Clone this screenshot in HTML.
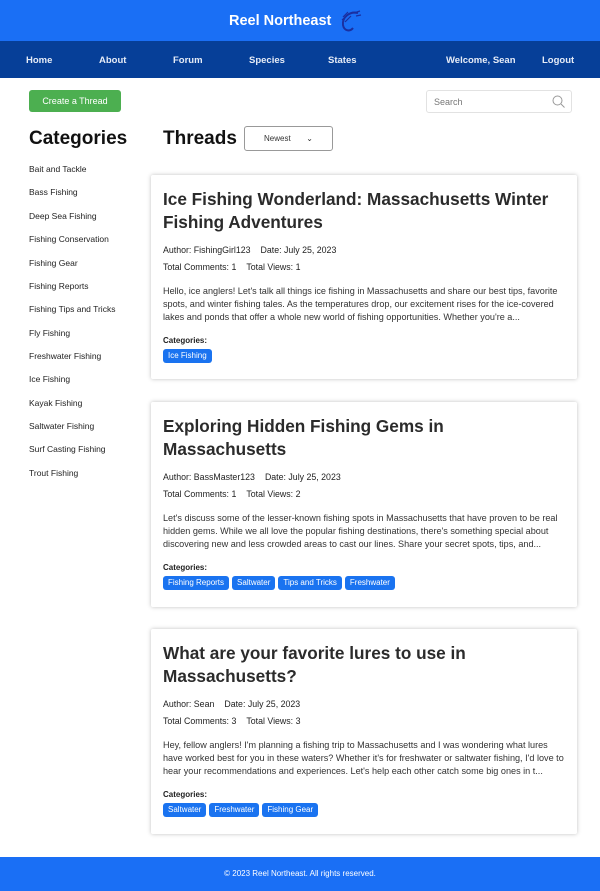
<!DOCTYPE html>
<html><head><meta charset="utf-8"><style>
*{margin:0;padding:0;box-sizing:border-box}
body{width:600px;height:891px;position:relative;background:#fff;font-family:"Liberation Sans",sans-serif;color:#222;overflow:hidden}
.hdr{position:absolute;left:0;top:0;width:600px;height:41px;background:#1a6ff5}
.hdr .t{position:absolute;left:229px;top:13px;font-size:14.5px;font-weight:bold;color:#fff}
.nav{position:absolute;left:0;top:41px;width:600px;height:37px;background:#063f98;color:#e6ecf7;font-size:9.5px;font-weight:bold}
.nav span{position:absolute;top:14px}
.btn{position:absolute;left:29px;top:90px;width:92px;height:22px;background:#4caf50;border-radius:3px;color:#fff;font-size:9px;text-align:center;line-height:22px}
.srch{position:absolute;left:426px;top:90px;width:146px;height:23px;border:1px solid #e2e2e2;border-radius:3px;font-size:9px;color:#777;padding:6px 7px}
h2{position:absolute;font-size:19px;font-weight:bold;color:#111}
.sel{position:absolute;left:244px;top:126px;width:89px;height:25px;border:1px solid #999;border-radius:3px;font-size:8px;text-align:center;line-height:23px;color:#333}
.cat{position:absolute;left:29px;font-size:8.5px;color:#222}
.card{position:absolute;left:151px;width:426px;background:#fff;box-shadow:0 0 4px rgba(0,0,0,.25);border-radius:2px;padding:12px 12px}
.card h3{font-size:17.2px;line-height:23px;font-weight:bold;color:#2b2b2b;margin-top:1px}
.m{font-size:8.8px;line-height:17px;margin-top:8px;color:#222}
.m span{margin-right:10px}
.d{font-size:9.1px;line-height:13px;color:#333;margin-top:9px}
.cl{font-size:8px;font-weight:bold;margin-top:12px}
.tags{margin-top:4px;font-size:0}
.tag{display:inline-block;background:#1a73f0;color:#fff;font-size:8px;padding:1px 5px 2px;border-radius:3px;margin-right:3px;line-height:11px}
.ft{position:absolute;left:0;top:857px;width:600px;height:34px;background:#1a6ff5;color:#fff;font-size:8px;text-align:center;line-height:34px}
</style></head><body>
<div class="hdr"><div class="t">Reel Northeast</div>
<svg style="position:absolute;left:336px;top:7px" width="28" height="28" viewBox="0 0 28 28"><path d="M22 6 C14 4 6 10 7 18 C8 24 14 25 17 21" stroke="#1a2fa0" stroke-width="2" fill="none"/><path d="M6 13 L13 7 M7 10 L12 5 M9 15 L15 9 M18 6 L24 4 M20 9 L25 8" stroke="#1a2fa0" stroke-width="1.2"/></svg></div>
<div class="nav"><span style="left:26px">Home</span><span style="left:99px">About</span><span style="left:173px">Forum</span><span style="left:249px">Species</span><span style="left:328px">States</span><span style="left:446px">Welcome, Sean</span><span style="left:542px">Logout</span></div>
<div class="btn">Create a Thread</div>
<div class="srch">Search<svg style="position:absolute;right:6px;top:4px" width="13" height="13" viewBox="0 0 13 13"><circle cx="5.5" cy="5.5" r="4.5" stroke="#999" fill="none"/><path d="M9 9 L12.5 12.5" stroke="#999"/></svg></div>
<h2 style="left:29px;top:128px">Categories</h2>
<h2 style="left:163px;top:128px">Threads</h2>
<div class="sel">Newest &nbsp;&nbsp;&nbsp;&nbsp;&nbsp;&nbsp;⌄</div>
<div class="cat" style="top:164px">Bait and Tackle</div>
<div class="cat" style="top:187px">Bass Fishing</div>
<div class="cat" style="top:211px">Deep Sea Fishing</div>
<div class="cat" style="top:234px">Fishing Conservation</div>
<div class="cat" style="top:258px">Fishing Gear</div>
<div class="cat" style="top:281px">Fishing Reports</div>
<div class="cat" style="top:304px">Fishing Tips and Tricks</div>
<div class="cat" style="top:328px">Fly Fishing</div>
<div class="cat" style="top:351px">Freshwater Fishing</div>
<div class="cat" style="top:374px">Ice Fishing</div>
<div class="cat" style="top:398px">Kayak Fishing</div>
<div class="cat" style="top:421px">Saltwater Fishing</div>
<div class="cat" style="top:444px">Surf Casting Fishing</div>
<div class="cat" style="top:468px">Trout Fishing</div>
<div class="card" style="top:175px;height:204px"><h3>Ice Fishing Wonderland: Massachusetts Winter Fishing Adventures</h3>
<div class="m"><span>Author: FishingGirl123</span>Date: July 25, 2023<br><span>Total Comments: 1</span>Total Views: 1</div>
<div class="d">Hello, ice anglers! Let's talk all things ice fishing in Massachusetts and share our best tips, favorite spots, and winter fishing tales. As the temperatures drop, our excitement rises for the ice-covered lakes and ponds that offer a whole new world of fishing opportunities. Whether you're a...</div>
<div class="cl">Categories:</div><div class="tags"><span class="tag">Ice Fishing</span></div></div>
<div class="card" style="top:402px;height:205px"><h3>Exploring Hidden Fishing Gems in Massachusetts</h3>
<div class="m"><span>Author: BassMaster123</span>Date: July 25, 2023<br><span>Total Comments: 1</span>Total Views: 2</div>
<div class="d">Let's discuss some of the lesser-known fishing spots in Massachusetts that have proven to be real hidden gems. While we all love the popular fishing destinations, there's something special about discovering new and less crowded areas to cast our lines. Share your secret spots, tips, and...</div>
<div class="cl">Categories:</div><div class="tags"><span class="tag">Fishing Reports</span><span class="tag">Saltwater</span><span class="tag">Tips and Tricks</span><span class="tag">Freshwater</span></div></div>
<div class="card" style="top:629px;height:205px"><h3>What are your favorite lures to use in Massachusetts?</h3>
<div class="m"><span>Author: Sean</span>Date: July 25, 2023<br><span>Total Comments: 3</span>Total Views: 3</div>
<div class="d">Hey, fellow anglers! I'm planning a fishing trip to Massachusetts and I was wondering what lures have worked best for you in these waters? Whether it's for freshwater or saltwater fishing, I'd love to hear your recommendations and experiences. Let's help each other catch some big ones in t...</div>
<div class="cl">Categories:</div><div class="tags"><span class="tag">Saltwater</span><span class="tag">Freshwater</span><span class="tag">Fishing Gear</span></div></div>
<div class="ft">© 2023 Reel Northeast. All rights reserved.</div>
</body></html>
